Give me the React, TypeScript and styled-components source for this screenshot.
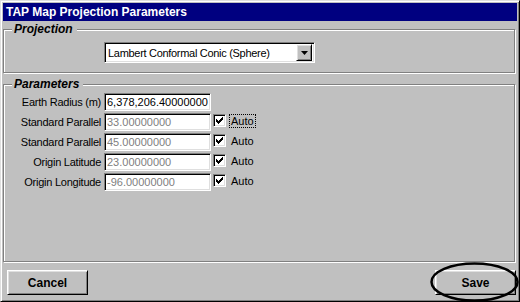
import { FC, Fragment } from 'react';
import styled, { createGlobalStyle } from 'styled-components';

const GlobalStyle = createGlobalStyle`
    html, body {
        margin: 0;
        padding: 0;
        background: #c0c0c0;
    }

    body {
        font-family: "Liberation Sans", Arial, sans-serif;
        font-size: 11px;
    }
`;

const Window = styled.div`
    position: relative;
    box-sizing: border-box;
    width: 520px;
    height: 302px;
    padding: 2px;
    display: flex;
    flex-direction: column;
    background: #c0c0c0;
    border: 1px solid;
    border-color: #dfdfdf #000 #000 #dfdfdf;
    box-shadow: inset 1px 1px 0 #fff, inset -1px -1px 0 #808080;
`;

const TitleBar = styled.div`
    height: 18px;
    padding-left: 3px;
    display: flex;
    align-items: center;
    background: #000080;
    color: #fff;
    font-weight: bold;
    font-size: 12px;
`;

const Group = styled.fieldset<{ $grow?: boolean; $top: number }>`
    margin: ${({ $top }) => $top}px 2px 0 0;
    padding: 0;
    min-width: 0;
    flex: ${({ $grow }) => ($grow ? 1 : 'none')};
    border: 1px solid #808080;
    box-shadow: 1px 1px 0 #fff, inset 1px 1px 0 #fff;
`;

const Legend = styled.legend`
    margin-left: 8px;
    padding: 0 4px 0 2px;
    background: #c0c0c0;
    font-size: 12px;
    line-height: 14px;
    font-weight: bold;
    font-style: italic;
`;

const sunken = `
    box-sizing: border-box;
    border: 1px solid;
    border-color: #808080 #fff #fff #808080;
    box-shadow: inset 1px 1px 0 #000, inset -1px -1px 0 #dfdfdf;
    background: #fff;
`;

const raised = `
    box-sizing: border-box;
    border: 1px solid;
    border-color: #fff #000 #000 #fff;
    box-shadow: inset 1px 1px 0 #dfdfdf, inset -1px -1px 0 #808080;
    background: #c0c0c0;
`;

const ComboRow = styled.div`
    padding: 6px 0 9px 100px;
`;

const Combo = styled.div`
    ${sunken};
    width: 211px;
    height: 21px;
    display: flex;
    align-items: center;
`;

const ComboText = styled.span`
    flex: 1;
    padding-left: 3px;
    font-size: 11px;
    letter-spacing: -0.3px;
    white-space: nowrap;
`;

const ComboButton = styled.span`
    ${raised};
    width: 16px;
    height: 17px;
    margin-right: 2px;
    display: flex;
    align-items: center;
    justify-content: center;
`;

const Form = styled.div`
    display: grid;
    grid-template-columns: 97px 107px auto;
    grid-auto-rows: 18px;
    row-gap: 2px;
    column-gap: 3px;
    align-items: start;
    padding-top: 2px;
`;

const Label = styled.label`
    text-align: right;
    font-size: 11px;
    line-height: 18px;
    letter-spacing: -0.25px;
    white-space: nowrap;
`;

const Field = styled.input<{ $dim?: boolean }>`
    ${sunken};
    width: 107px;
    height: 18px;
    margin: 0;
    padding: 0 2px;
    font-family: "Liberation Sans", Arial, sans-serif;
    font-size: 11px;
    color: ${({ $dim }) => ($dim ? '#808080' : '#000')};
    outline: none;
`;

const AutoWrap = styled.div`
    display: flex;
    align-items: flex-start;
    margin-left: -1px;
    padding-top: 1px;
`;

const CheckBox = styled.span`
    ${sunken};
    width: 13px;
    height: 13px;
    display: block;
`;

const AutoLabel = styled.span<{ $focus?: boolean }>`
    margin-left: 3px;
    padding: 0 1px;
    font-size: 11px;
    line-height: 12px;
    border: 1px dotted ${({ $focus }) => ($focus ? '#000' : 'transparent')};
`;

const ButtonBar = styled.div`
    display: flex;
    justify-content: space-between;
    padding: 8px 1px 4px 4px;
`;

const Button = styled.button`
    ${raised};
    width: 81px;
    height: 25px;
    padding: 0;
    font-family: "Liberation Sans", Arial, sans-serif;
    font-size: 12px;
    font-weight: bold;
    color: #000;
`;

const Circle = styled.svg`
    position: absolute;
    left: 427px;
    top: 259px;
    pointer-events: none;
`;

const checkColumns = [2, 3, 4, 3, 2, 1, 0];

const Check: FC = () => (
    <CheckBox>
        <svg width="11" height="11" viewBox="0 0 11 11" style={{ display: 'block' }}>
            <path d={checkColumns.map((y, x) => `M${x + 2} ${y + 2}h1v3h-1z`).join('')} fill="#000" />
        </svg>
    </CheckBox>
);

const params = [
    { label: 'Earth Radius (m)', value: '6,378,206.40000000', auto: false, focus: false },
    { label: 'Standard Parallel', value: '33.00000000', auto: true, focus: true },
    { label: 'Standard Parallel', value: '45.00000000', auto: true, focus: false },
    { label: 'Origin Latitude', value: '23.00000000', auto: true, focus: false },
    { label: 'Origin Longitude', value: '-96.00000000', auto: true, focus: false },
];

const App: FC = () => (
    <>
        <GlobalStyle />
        <Window>
            <TitleBar>TAP Map Projection Parameters</TitleBar>
            <Group $top={1}>
                <Legend>Projection</Legend>
                <ComboRow>
                    <Combo>
                        <ComboText>Lambert Conformal Conic (Sphere)</ComboText>
                        <ComboButton>
                            <svg width="7" height="4" viewBox="0 0 7 4">
                                <path d="M0 0h7l-3.5 4z" fill="#000" />
                            </svg>
                        </ComboButton>
                    </Combo>
                </ComboRow>
            </Group>
            <Group $top={4} $grow>
                <Legend>Parameters</Legend>
                <Form>
                    {params.map(({ label, value, auto, focus }, i) => (
                        <Fragment key={i}>
                            <Label>{label}</Label>
                            <Field readOnly defaultValue={value} $dim={auto} />
                            {auto ? (
                                <AutoWrap>
                                    <Check />
                                    <AutoLabel $focus={focus}>Auto</AutoLabel>
                                </AutoWrap>
                            ) : (
                                <span />
                            )}
                        </Fragment>
                    ))}
                </Form>
            </Group>
            <ButtonBar>
                <Button>Cancel</Button>
                <Button>Save</Button>
            </ButtonBar>
            <Circle width="92" height="43" viewBox="0 0 92 43">
                <ellipse cx="46.5" cy="22" rx="43" ry="18.5" fill="none" stroke="#000" strokeWidth="2.5" />
            </Circle>
        </Window>
    </>
);

export default App;
